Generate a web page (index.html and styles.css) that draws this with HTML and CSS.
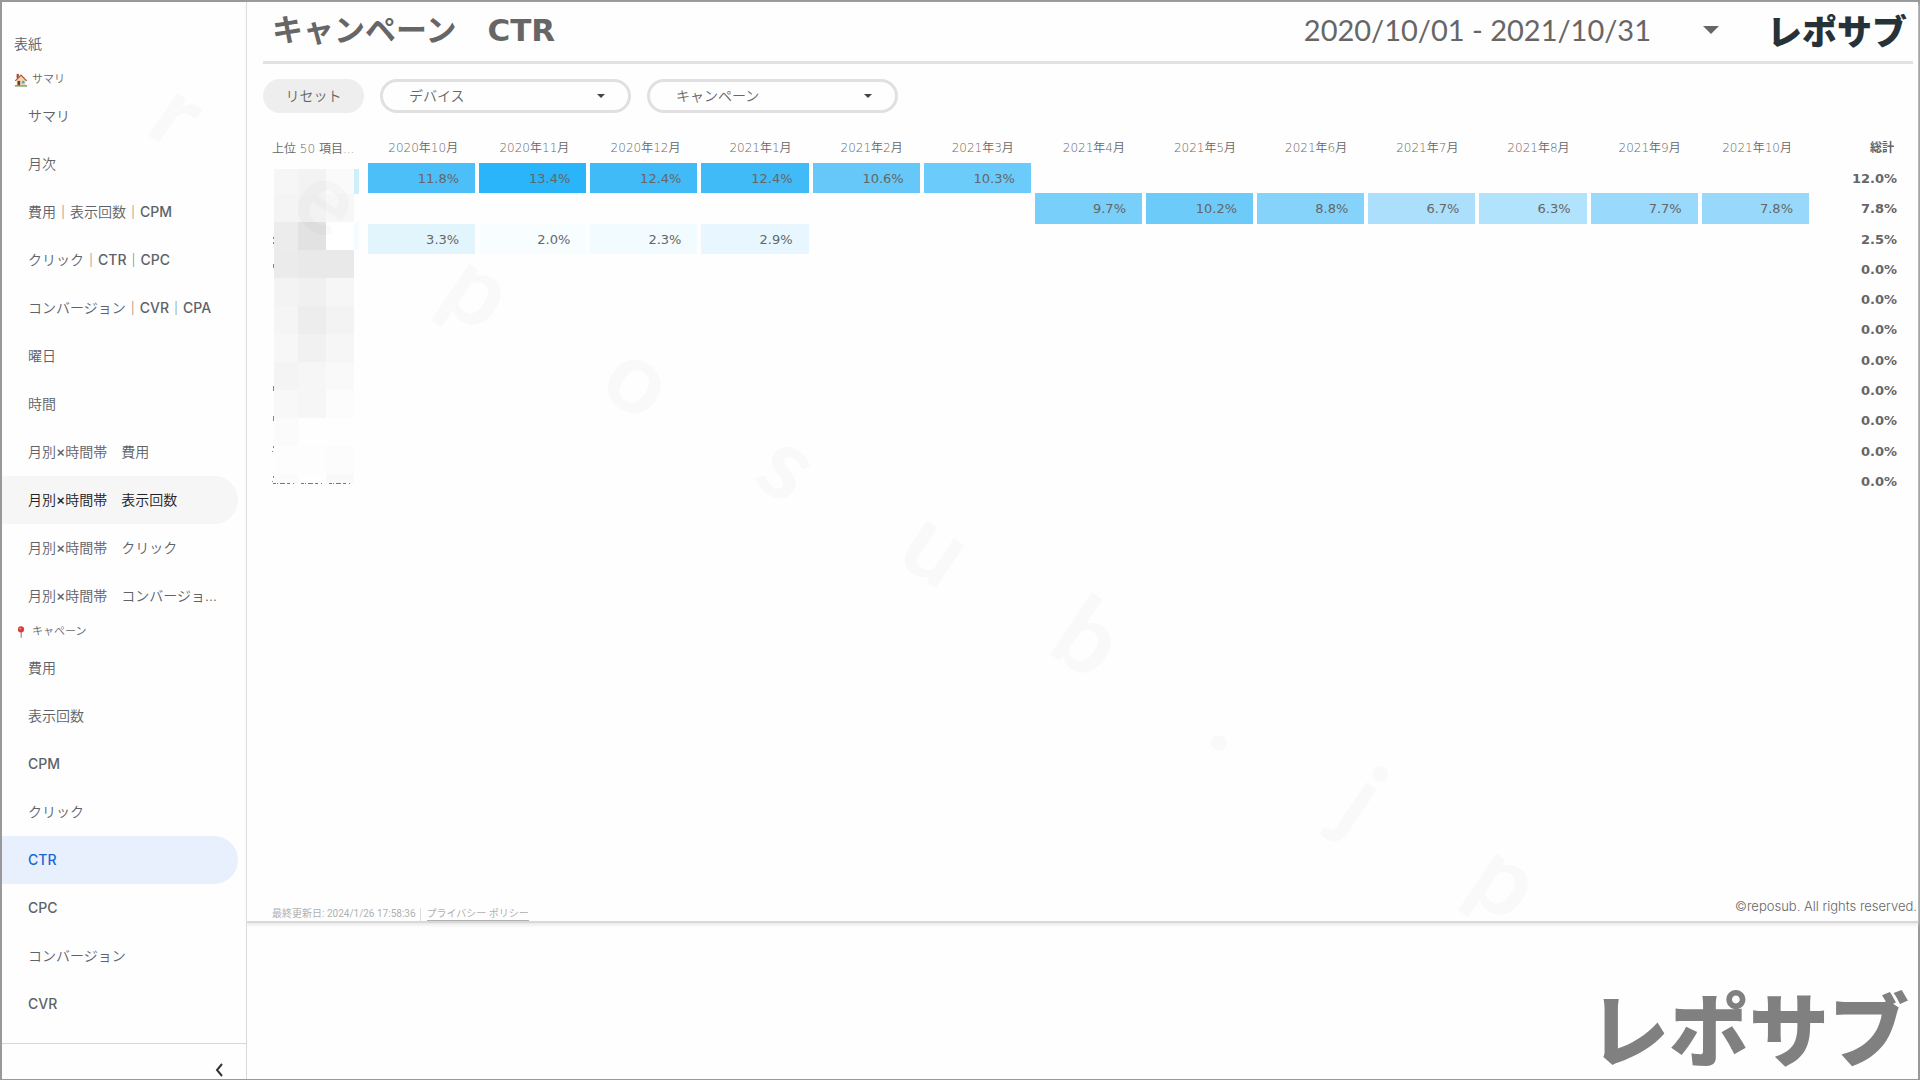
FILE: index.html
```html
<!DOCTYPE html>
<html lang="ja">
<head>
<meta charset="utf-8">
<title>キャンペーン CTR</title>
<link rel="stylesheet" href="styles.css">
</head>
<body>
<div class="app">
  <nav class="sidebar">
    <div class="pages">
      <a class="page top" href="#">表紙</a>
      <h2 class="group">
        <svg class="emoji" viewBox="0 0 14 16" aria-hidden="true"><path d="M2 1h2.500v5H2z" fill="#a34b35"/><path d="M2 8l5-5 5 5v6H2z" fill="#ecd9ac"/><path d="M0 8.500L7 1.500l7 7-1 1-6-6-6 6z" fill="#b5523c"/><path d="M3 9h3v5H3z" fill="#7c3527"/><path d="M8 9h3v3H8z" fill="#5ba4d6"/><path d="M0 14h14v1.500H0z" fill="#6d9346"/></svg>
        サマリ</h2>
      <a class="page" href="#">サマリ</a>
      <a class="page" href="#">月次</a>
      <a class="page" href="#">費用｜表示回数｜<span class="en">CPM</span></a>
      <a class="page" href="#">クリック｜<span class="en">CTR</span>｜<span class="en">CPC</span></a>
      <a class="page" href="#">コンバージョン｜<span class="en">CVR</span>｜<span class="en">CPA</span></a>
      <a class="page" href="#">曜日</a>
      <a class="page" href="#">時間</a>
      <a class="page" href="#">月別<span class="en">×</span>時間帯　費用</a>
      <a class="page hover" href="#">月別<span class="en">×</span>時間帯　表示回数</a>
      <a class="page" href="#">月別<span class="en">×</span>時間帯　クリック</a>
      <a class="page" href="#">月別<span class="en">×</span>時間帯　コンバージョ...</a>
      <h2 class="group">
        <svg class="emoji" viewBox="0 0 14 16" aria-hidden="true"><path d="M6.500 7h1.500v7.500H6.500z" fill="#999"/><circle cx="7" cy="5" r="3.500" fill="#dd3a32"/><circle cx="6" cy="4" r="1" fill="#f59a92"/></svg>
        キャペーン</h2>
      <a class="page" href="#">費用</a>
      <a class="page" href="#">表示回数</a>
      <a class="page" href="#"><span class="en">CPM</span></a>
      <a class="page" href="#">クリック</a>
      <a class="page current" href="#" aria-current="page"><span class="en">CTR</span></a>
      <a class="page" href="#"><span class="en">CPC</span></a>
      <a class="page" href="#">コンバージョン</a>
      <a class="page" href="#"><span class="en">CVR</span></a>
    </div>
    <div class="fold">
      <button class="collapse" aria-label="折りたたむ"><svg width="8" height="14" viewBox="0 0 8 14"><path d="M7 1L2 7l5 6" fill="none" stroke="#333" stroke-width="2"/></svg></button>
    </div>
  </nav>

  <main class="main">
    <section class="report">
      <header class="head">
        <h1 class="title">キャンペーン　CTR</h1>
        <button class="dates"><span>2020/10/01 - 2021/10/31</span><svg width="16" height="8" viewBox="0 0 16 8" aria-hidden="true"><path d="M0 0h16L8 8z" fill="#666"/></svg></button>
        <div class="logo">レポサブ</div>
      </header>
      <div class="filters">
        <button class="reset">リセット</button>
        <div class="pick"><select aria-label="デバイス"><option>デバイス</option></select><svg class="caret" width="8" height="4" viewBox="0 0 8 4" aria-hidden="true"><path d="M0 0h8L4 4z" fill="#444"/></svg></div>
        <div class="pick"><select aria-label="キャンペーン"><option>キャンペーン</option></select><svg class="caret" width="8" height="4" viewBox="0 0 8 4" aria-hidden="true"><path d="M0 0h8L4 4z" fill="#444"/></svg></div>
      </div>
      <div class="pivot">
        <table class="heat">
          <colgroup><col class="c-name"><col span="13"><col class="c-total"></colgroup>
          <thead><tr><th class="name">上位 50 項目...</th><th>2020年10月</th><th>2020年11月</th><th>2020年12月</th><th>2021年1月</th><th>2021年2月</th><th>2021年3月</th><th>2021年4月</th><th>2021年5月</th><th>2021年6月</th><th>2021年7月</th><th>2021年8月</th><th>2021年9月</th><th>2021年10月</th><th class="total">総計</th></tr></thead>
          <tbody>
            <tr><td></td><td style="background-color:#4dbff8">11.8%</td><td style="background-color:#2ab4f9">13.4%</td><td style="background-color:#40bbf8">12.4%</td><td style="background-color:#40bbf8">12.4%</td><td style="background-color:#65c8f9">10.6%</td><td style="background-color:#6bcbfa">10.3%</td><td></td><td></td><td></td><td></td><td></td><td></td><td></td><td class="total">12.0%</td></tr>
            <tr><td></td><td></td><td></td><td></td><td></td><td></td><td></td><td style="background-color:#77cffa">9.7%</td><td style="background-color:#6dcbfa">10.2%</td><td style="background-color:#85d3fb">8.8%</td><td style="background-color:#abdffb">6.7%</td><td style="background-color:#b1e3fc">6.3%</td><td style="background-color:#99d9fb">7.7%</td><td style="background-color:#98d9fb">7.8%</td><td class="total">7.8%</td></tr>
            <tr><td></td><td style="background-color:#e2f5fd">3.3%</td><td style="background-color:#f8fdff">2.0%</td><td style="background-color:#f2fbff">2.3%</td><td style="background-color:#e8f7ff">2.9%</td><td></td><td></td><td></td><td></td><td></td><td></td><td></td><td></td><td></td><td class="total">2.5%</td></tr>
            <tr><td colspan="14"></td><td class="total">0.0%</td></tr>
            <tr><td colspan="14"></td><td class="total">0.0%</td></tr>
            <tr><td colspan="14"></td><td class="total">0.0%</td></tr>
            <tr><td colspan="14"></td><td class="total">0.0%</td></tr>
            <tr><td colspan="14"></td><td class="total">0.0%</td></tr>
            <tr><td colspan="14"></td><td class="total">0.0%</td></tr>
            <tr><td colspan="14"></td><td class="total">0.0%</td></tr>
            <tr><td colspan="14"></td><td class="total">0.0%</td></tr>
          </tbody>
        </table>
        <svg class="mosaic" width="88" height="316" viewBox="0 0 88 316" aria-hidden="true">
          <path d="M82 0h5v25h-5z" fill="#cfeefc"/><path d="M82 53h5v28h-5z" fill="#f5fcff"/>
          <path d="M2 0h24v25H2z" fill="#f6f6f6"/><path d="M26 0h28v25H26z" fill="#f3f3f3"/><path d="M54 0h28v25H54z" fill="#fafafa"/>
          <path d="M2 25h24v28H2z" fill="#f4f4f4"/><path d="M26 25h28v28H26z" fill="#f2f2f2"/><path d="M54 25h28v28H54z" fill="#f7f7f7"/>
          <path d="M2 53h24v28H2z" fill="#ececec"/><path d="M26 53h28v28H26z" fill="#e2e2e2"/><path d="M54 53h28v28H54z" fill="#fff"/>
          <path d="M2 81h24v28H2z" fill="#ebebeb"/><path d="M26 81h56v28H26z" fill="#e9e9e9"/>
          <path d="M2 109h24v28H2z" fill="#f3f3f3"/><path d="M26 109h28v28H26z" fill="#f0f0f0"/><path d="M54 109h28v28H54z" fill="#f6f6f6"/>
          <path d="M2 137h24v28H2z" fill="#f5f5f5"/><path d="M26 137h28v28H26z" fill="#ededed"/><path d="M54 137h28v28H54z" fill="#f3f3f3"/>
          <path d="M2 165h24v28H2z" fill="#f7f7f7"/><path d="M26 165h28v28H26z" fill="#f1f1f1"/><path d="M54 165h28v28H54z" fill="#f6f6f6"/>
          <path d="M2 193h24v28H2z" fill="#f4f4f4"/><path d="M26 193h28v28H26z" fill="#f6f6f6"/><path d="M54 193h28v28H54z" fill="#f9f9f9"/>
          <path d="M2 221h24v28H2z" fill="#f8f8f8"/><path d="M26 221h28v28H26z" fill="#f6f6f6"/><path d="M54 221h28v28H54z" fill="#fcfcfc"/>
          <path d="M2 249h24v28H2z" fill="#fbfbfb"/><path d="M26 249h56v28H26z" fill="#fefefe"/>
          <path d="M2 277h52v28H2z" fill="#fdfdfd"/><path d="M54 277h28v28H54z" fill="#fcfcfc"/>
          <path d="M2 305h24v9H2z" fill="#fbfbfb"/><path d="M26 305h28v9H26z" fill="#fefefe"/><path d="M54 305h28v9H54z" fill="#f9f9f9"/>
          <path d="M1 68h1v2H1zM1 73h1v2H1zM1 95h1v4H1zM1 217h1v5H1zM1 247h1v5H1zM1 277h1v2H1zM0 282h1v1H0zM1 307h1v2H1zM0 312h1v1H0z" fill="#888"/>
          <path d="M1 314.500H81" stroke="#777" stroke-dasharray="3 1 1 2 5 2 3 3 1 7"/>
        </svg>
      </div>
      <footer class="foot">
        <p class="updated"><span>最終更新日: 2024/1/26 17:58:36</span><a href="#">プライバシー ポリシー</a></p>
        <p class="rights">©reposub. All rights reserved.</p>
      </footer>
    </section>
    <div class="brand">レポサブ</div>
  </main>

  <svg class="watermark" viewBox="0 0 1916 960" aria-hidden="true">
    <g transform="translate(-2 -2)">
      <text transform="translate(173 122) rotate(34)" y="25">r</text>
      <text transform="translate(322 207) rotate(34)" y="25">e</text>
      <text transform="translate(473 298) rotate(34)" y="25">p</text>
      <text transform="translate(634 387) rotate(34)" y="25">o</text>
      <text transform="translate(783 473) rotate(34)" y="25">s</text>
      <text transform="translate(931 555) rotate(34)" y="25">u</text>
      <text transform="translate(1083 646) rotate(34)" y="25">b</text>
      <text transform="translate(1229 728) rotate(34)" y="25">.</text>
      <text transform="translate(1357 808) rotate(34)" y="25">j</text>
      <text transform="translate(1500 888) rotate(34)" y="25">p</text>
    </g>
  </svg>
</div>
</body>
</html>
```
FILE: styles.css
```css
* { box-sizing: border-box; }
body {
  margin: 0;
  background: #fefefe;
  color: #666;
  font: 14px/20px Roboto, "Noto Sans CJK JP", sans-serif;
}
h1, h2, p { margin: 0; }
button, select { font: inherit; color: inherit; border: 0; background: none; padding: 0; }
.app {
  position: relative;
  display: flex;
  min-height: 100vh;
  border: 2px solid #999;
}

/* Sidebar */
.sidebar {
  display: flex;
  flex-direction: column;
  flex: none;
  width: 245px;
  border-right: 1px solid #d8d8d8;
}
.pages { flex: 1; padding: 18px 8px 15px 0; }
.page {
  display: block;
  height: 48px;
  padding: 0 16px 0 26px;
  border-radius: 0 24px 24px 0;
  line-height: 48px;
  font-family: Inter, "Noto Sans CJK JP", sans-serif;
  font-weight: 350;
  color: #5f6368;
  text-decoration: none;
  white-space: nowrap;
  overflow: hidden;
  text-overflow: ellipsis;
}
.page .en { font-weight: 500; }
.page.top { padding-left: 12px; }
.page.hover { background: #f6f6f6; color: #202124; }
.page.current { background: #e8f0fe; color: #1967d2; }
.group {
  display: flex;
  align-items: center;
  gap: 4px;
  height: 24px;
  padding-left: 12px;
  font-size: 11px;
  font-weight: 350;
}
.emoji { width: 14px; height: 14px; }
.fold {
  display: flex;
  justify-content: flex-end;
  height: 36px;
  padding: 19px 23px 0 0;
  border-top: 1px solid #d8d8d8;
}
.collapse { display: block; height: 14px; line-height: 0; }

/* Report */
.main { display: flex; flex-direction: column; flex: 1; min-width: 0; }
.report {
  display: flex;
  flex-direction: column;
  flex: 1;
  padding: 0 5px 0 16px;
  border-bottom: 2px solid #d8d8d8;
  box-shadow: 0 2px 3px #e8e8e8;
}
.head {
  display: flex;
  align-items: center;
  height: 62px;
  padding: 0 6px 4px 9px;
  border-bottom: 3px solid #e2e2e2;
}
.title {
  flex: 1;
  font: bold 31px/40px "DejaVu Sans", "Noto Sans CJK JP", sans-serif;
}
.dates {
  display: flex;
  align-items: center;
  gap: 52px;
  margin-right: 48px;
  font: 29px/40px Lato, sans-serif;
}
.logo { font: 900 35px/40px "Noto Sans CJK JP", sans-serif; color: #263238; }
.filters { display: flex; gap: 16px; padding: 15px 0 21px; }
.reset { width: 101px; height: 34px; border-radius: 17px; background: #eee; font-weight: 350; }
.pick { position: relative; width: 251px; }
.pick select {
  width: 100%;
  height: 34px;
  padding: 0 24px 0 26px;
  border: 3px solid #e0e0e0;
  border-radius: 17px;
  font-weight: 350;
  appearance: none;
}
.caret { position: absolute; right: 26px; top: 15px; pointer-events: none; }

/* Heat map */
.pivot { position: relative; flex: 1; }
.heat {
  width: 100%;
  height: 362px;
  table-layout: fixed;
  border-collapse: separate;
  border-spacing: 0;
  font: 13px/20px "DejaVu Sans", "Noto Sans CJK JP", sans-serif;
}
.c-name { width: 103px; }
.c-total { width: 102px; }
.heat th { height: 29px; padding: 0 19px 2px 0; font-size: 12px; font-weight: 350; text-align: right; white-space: nowrap; }
.heat td { height: 30px; padding: 2px 16px 0 0; border: solid #fefefe; border-width: 0 2px; text-align: right; }
.heat th.name { padding: 0 0 0 9px; text-align: left; }
.heat td.total { padding-right: 14px; font-weight: bold; }
.heat th.total { padding-right: 19px; font-weight: bold; }
.mosaic { position: absolute; left: 9px; top: 35px; }

.foot { display: flex; justify-content: space-between; align-items: flex-end; padding-left: 9px; }
.updated { display: flex; gap: 6px; font-size: 10px; line-height: 12px; color: #b0b0b0; }
.updated span { padding-right: 4px; border-right: 1px solid #ddd; }
.updated a { color: inherit; text-decoration: none; border-bottom: 1px solid #b0b0b0; }
.rights { margin-right: -4px; padding-bottom: 5px; font: 300 13px/20px Inter, sans-serif; }
.brand { padding: 48px 9px 0; text-align: right; font: 900 80px/108px "Noto Sans CJK JP", sans-serif; color: #808080; }

.watermark { position: absolute; left: 0; top: 0; width: 100%; pointer-events: none; }
.watermark text {
  font: bold 100px Lato, sans-serif;
  text-anchor: middle;
  fill: #000;
  opacity: 0.016;
}
```
